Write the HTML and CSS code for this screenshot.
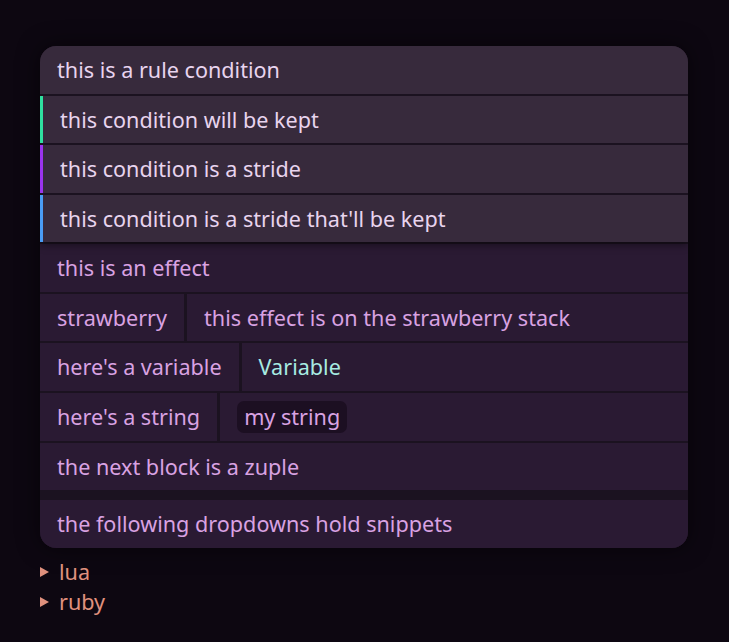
FILE: index.html
```html
<!DOCTYPE html>
<html>
<head>
<meta charset="utf-8">
<link rel="stylesheet" href="styles.css">
</head>
<body>
<main class="page">
  <section class="card">
    <div class="conditions">
      <div class="row cond">this is a rule condition</div>
      <div class="row cond kept">this condition will be kept</div>
      <div class="row cond stride">this condition is a stride</div>
      <div class="row cond stride-kept">this condition is a stride that'll be kept</div>
    </div>
    <div class="effects">
      <div class="row eff">this is an effect</div>
      <div class="split">
        <div class="cell">strawberry</div>
        <div class="cell grow">this effect is on the strawberry stack</div>
      </div>
      <div class="split">
        <div class="cell">here's a variable</div>
        <div class="cell grow"><span class="variable">Variable</span></div>
      </div>
      <div class="split">
        <div class="cell">here's a string</div>
        <div class="cell grow"><span class="string">my string</span></div>
      </div>
      <div class="row eff">the next block is a zuple</div>
      <div class="zuple"></div>
      <div class="row eff last">the following dropdowns hold snippets</div>
    </div>
  </section>
  <details class="snippet"><summary>lua</summary></details>
  <details class="snippet"><summary>ruby</summary></details>
</main>
</body>
</html>
```

FILE: styles.css
```css
html, body {
  margin: 0;
  padding: 0;
  background: #0d0711;
  font-family: "Noto Sans", "DejaVu Sans", sans-serif;
  font-size: 21.6px;
}

.page {
  padding: 46px 40px 0 40px;
  width: 648px;
}

.card {
  width: 648px;
  border-radius: 16px;
  overflow: hidden;
  background: #1b1220;
  box-shadow: 0 0 22px rgba(0, 0, 0, 0.55);
  display: flex;
  flex-direction: column;
}

.conditions {
  display: flex;
  flex-direction: column;
  gap: 2px;
  position: relative;
  z-index: 1;
  box-shadow: 0 3px 8px rgba(0, 0, 0, 0.45);
  background: #1b1220;
}

.effects {
  display: flex;
  flex-direction: column;
  gap: 2px;
  padding-top: 2px;
  background: #1b1220;
}

.row {
  padding: 10px 17px;
  line-height: 27.5px;
}

.cond {
  background: #372a3c;
  color: #e8d4ee;
}

.kept { border-left: 3px solid #2fe0a0; }
.stride { border-left: 3px solid #9b34ee; }
.stride-kept { border-left: 3px solid #4a9cf5; }

.eff {
  background: #2a1a33;
  color: #d9a2e2;
}

.split {
  display: flex;
  gap: 3px;
}

.cell {
  background: #2a1a33;
  color: #d9a2e2;
  padding: 10px 17px;
  line-height: 27.5px;
  display: flex;
  align-items: center;
}

.cell.grow { flex: 1; }

.variable {
  color: #a7ebe2;
}

.string {
  background: #1c0f22;
  border-radius: 7px;
  padding: 2px 7px;
  line-height: 28px;
  margin: -2px 0;
}

.zuple {
  height: 6px;
  background: #1b1220;
}

.snippet {
  color: #e0917e;
  line-height: 30px;
}

.snippet:first-of-type {
  margin-top: 9px;
}

.snippet summary {
  list-style: none;
  line-height: 30px;
  cursor: pointer;
  display: flex;
  align-items: center;
}

.snippet summary::-webkit-details-marker {
  display: none;
}

.snippet summary::before {
  content: "";
  width: 0;
  height: 0;
  border-top: 5px solid transparent;
  border-bottom: 5px solid transparent;
  border-left: 9px solid #e0917e;
  margin-right: 10px;
  margin-top: 1px;
}
```
